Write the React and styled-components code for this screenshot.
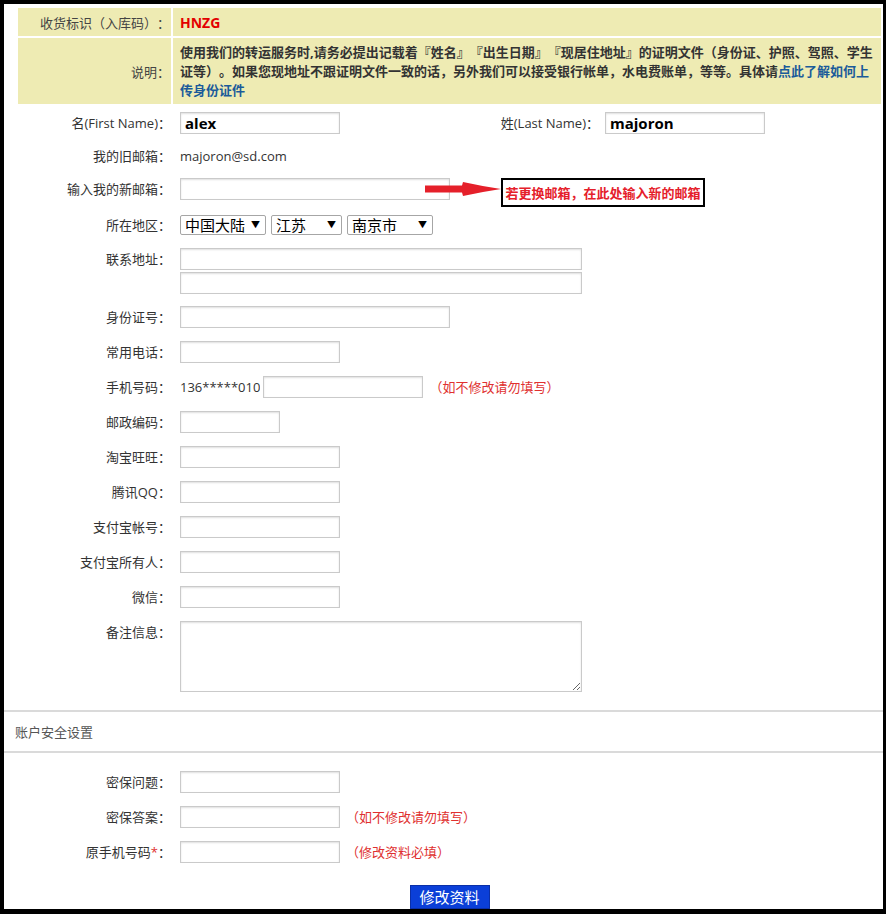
import styled, { createGlobalStyle } from "styled-components";

const GlobalStyle = createGlobalStyle`
  body {
    margin: 0;
    background: #fff;
    font-family: "Open Sans", "Noto Sans CJK SC", sans-serif;
    font-size: 13px;
    color: #333;
    text-spacing-trim: space-all;
  }
`;

const Frame = styled.div`
  width: 886px;
  height: 914px;
  box-sizing: border-box;
  border-style: solid;
  border-color: #000;
  border-width: 4px 3px 5px 4px;
  overflow: hidden;
  display: flex;
  flex-direction: column;
`;

const InfoTable = styled.div`
  display: flex;
  flex-direction: column;
  gap: 2px;
  padding: 4px 2px 0 14px;
`;

const InfoRow = styled.div`
  display: grid;
  grid-template-columns: 153px 1fr;
  column-gap: 2px;
  height: ${(p) => p.$height}px;
`;

const InfoLabel = styled.div`
  background: #eeebb3;
  padding-right: 1px;
  display: flex;
  align-items: center;
  justify-content: flex-end;
  color: #444;
  white-space: nowrap;
`;

const InfoValue = styled.div`
  background: #eeebb3;
  padding: ${(p) => (p.$multi ? "5px 0 4px 7px" : "0 0 0 7px")};
  display: flex;
  align-items: center;
  line-height: 19px;
`;

const Code = styled.span`
  color: #e30000;
  font-weight: 700;
  font-size: 14px;
`;

const Notice = styled.p`
  margin: 0;
  font-weight: 700;
  color: #333;
  white-space: nowrap;
`;

const NoticeLink = styled.a`
  color: #1b5b9a;
  text-decoration: none;
`;

const Form = styled.div`
  display: flex;
  flex-direction: column;
  padding-top: ${(p) => p.$top || 0}px;
  padding-bottom: ${(p) => p.$bottom || 0}px;
`;

const Row = styled.div`
  display: flex;
  align-items: flex-start;
  padding: ${(p) => p.$pad || "6px 0 7px"};
`;

const Label = styled.label`
  flex: none;
  width: 167px;
  height: ${(p) => (p.$compact ? 20 : 22)}px;
  box-sizing: border-box;
  text-align: right;
  line-height: ${(p) => (p.$compact ? 20 : 22)}px;
  color: #333;
  white-space: nowrap;
  overflow: hidden;
`;

const Star = styled.span`
  color: #e03030;
`;

const Field = styled.div`
  position: relative;
  margin-left: 9px;
  display: flex;
  gap: ${(p) => p.$gap || 0}px;
  flex-direction: ${(p) => (p.$column ? "column" : "row")};
  align-items: ${(p) => (p.$column ? "flex-start" : "center")};
`;

const Input = styled.input`
  box-sizing: border-box;
  width: ${(p) => p.$w || 160}px;
  height: 22px;
  border: 1px solid #cacaca;
  box-shadow: inset 0 1px 2px rgba(0, 0, 0, 0.13);
  padding: 0 4px;
  font-family: "Open Sans", "Liberation Sans", sans-serif;
  font-size: 15px;
  font-weight: 700;
  color: #000;
  background: #fff;
  outline: none;
`;

const TextArea = styled.textarea`
  display: block;
  box-sizing: border-box;
  width: 402px;
  height: 71px;
  margin: 0;
  border: 1px solid #cacaca;
  box-shadow: inset 0 1px 2px rgba(0, 0, 0, 0.13);
  font-family: inherit;
  font-size: 13px;
  outline: none;
`;

const PlainValue = styled.span`
  height: 22px;
  line-height: 22px;
  color: #333;
  margin-right: ${(p) => p.$mr || 0}px;
  overflow: hidden;
`;

const LastLabel = styled(Label)`
  width: 265px;
  padding-right: 6px;
`;

const Note = styled.span`
  height: 22px;
  color: #e0302f;
  margin-left: 6px;
  line-height: 22px;
  overflow: hidden;
`;

const SelectWrap = styled.div`
  position: relative;
  width: ${(p) => p.$w}px;
  height: 20px;
  &::after {
    content: "▼";
    position: absolute;
    right: 6px;
    top: 4px;
    font-size: 9px;
    line-height: 12px;
    color: #000;
    pointer-events: none;
  }
`;

const Select = styled.select`
  appearance: none;
  display: block;
  box-sizing: border-box;
  width: 100%;
  height: 20px;
  margin: 0;
  border: 1px solid #a6a6a6;
  border-radius: 2px;
  background: #fff;
  padding: 0 0 0 4px;
  font-family: "Noto Sans CJK SC", sans-serif;
  font-size: 15px;
  line-height: 18px;
  color: #000;
  outline: none;
`;

const Arrow = styled.svg`
  position: absolute;
  left: 245px;
  top: 3px;
`;

const Callout = styled.div`
  position: absolute;
  left: 321px;
  top: 0;
  width: 204px;
  height: 29px;
  box-sizing: border-box;
  border: 2px solid #000;
  display: flex;
  align-items: center;
  justify-content: center;
  color: #e5202a;
  font-weight: 700;
  font-family: "Noto Sans CJK SC", sans-serif;
  white-space: nowrap;
`;

const SectionTitle = styled.div`
  height: 44px;
  box-sizing: border-box;
  border-top: 2px solid #dadada;
  border-bottom: 2px solid #dadada;
  padding-left: 11px;
  display: flex;
  align-items: center;
  color: #555;
`;

const ButtonBar = styled.div`
  display: flex;
  justify-content: center;
  padding: 15px 0 0 12px;
`;

const SubmitButton = styled.button`
  width: 80px;
  height: 24px;
  border: 1px solid #0a2fa8;
  background: #0b3fd8;
  color: #fff;
  font-family: "Noto Sans CJK SC", sans-serif;
  font-size: 15px;
  padding: 0;
  line-height: 22px;
`;

const simpleFields = [
  ["身份证号", 270],
  ["常用电话", 160],
];

const moreFields = [
  ["邮政编码", 100],
  ["淘宝旺旺", 160],
  ["腾讯QQ", 160],
  ["支付宝帐号", 160],
  ["支付宝所有人", 160],
  ["微信", 160],
];

export default function App() {
  return (
    <>
      <GlobalStyle />
      <Frame>
        <InfoTable>
          <InfoRow $height={28}>
            <InfoLabel>收货标识（入库码）：</InfoLabel>
            <InfoValue>
              <Code>HNZG</Code>
            </InfoValue>
          </InfoRow>
          <InfoRow $height={66}>
            <InfoLabel>说明：</InfoLabel>
            <InfoValue $multi>
              <Notice>
                使用我们的转运服务时,请务必提出记载着『姓名』『出生日期』『现居住地址』的证明文件（身份证、护照、驾照、学生
                <br />
                证等）。如果您现地址不跟证明文件一致的话，另外我们可以接受银行帐单，水电费账单，等等。具体请
                <NoticeLink href="#">
                  点此了解如何上
                  <br />
                  传身份证件
                </NoticeLink>
              </Notice>
            </InfoValue>
          </InfoRow>
        </InfoTable>

        <Form $top={2} $bottom={11}>
          <Row $pad="6px 0 5px">
            <Label>名(First Name)：</Label>
            <Field>
              <Input defaultValue="alex" />
              <LastLabel as="span">姓(Last Name)：</LastLabel>
              <Input defaultValue="majoron" />
            </Field>
          </Row>
          <Row $pad="6px 0 5px">
            <Label>我的旧邮箱：</Label>
            <Field>
              <PlainValue>majoron@sd.com</PlainValue>
            </Field>
          </Row>
          <Row>
            <Label>输入我的新邮箱：</Label>
            <Field>
              <Input $w={270} />
              <Arrow width="76" height="16" viewBox="0 0 76 16">
                <path d="M0 4.5 H37 L38 1 Q56 5 76 8 Q56 11 38 15 L37 11.5 H0 Z" fill="#e5202a" />
              </Arrow>
              <Callout>若更换邮箱，在此处输入新的邮箱</Callout>
            </Field>
          </Row>
          <Row $pad="8px 0 7px">
            <Label $compact>所在地区：</Label>
            <Field $gap={5}>
              <SelectWrap $w={86}>
                <Select defaultValue="cn">
                  <option value="cn">中国大陆</option>
                </Select>
              </SelectWrap>
              <SelectWrap $w={71}>
                <Select defaultValue="js">
                  <option value="js">江苏</option>
                </Select>
              </SelectWrap>
              <SelectWrap $w={86}>
                <Select defaultValue="nj">
                  <option value="nj">南京市</option>
                </Select>
              </SelectWrap>
            </Field>
          </Row>
          <Row $pad="6px 0 6px">
            <Label>联系地址：</Label>
            <Field $column $gap={2}>
              <Input $w={402} />
              <Input $w={402} />
            </Field>
          </Row>
          {simpleFields.map(([label, w]) => (
            <Row key={label}>
              <Label>{label}：</Label>
              <Field>
                <Input $w={w} />
              </Field>
            </Row>
          ))}
          <Row>
            <Label>手机号码：</Label>
            <Field>
              <PlainValue $mr={3}>136*****010</PlainValue>
              <Input $w={160} />
              <Note>（如不修改请勿填写）</Note>
            </Field>
          </Row>
          {moreFields.map(([label, w]) => (
            <Row key={label}>
              <Label>{label}：</Label>
              <Field>
                <Input $w={w} />
              </Field>
            </Row>
          ))}
          <Row>
            <Label>备注信息：</Label>
            <Field>
              <TextArea />
            </Field>
          </Row>
        </Form>

        <SectionTitle>账户安全设置</SectionTitle>

        <Form $top={12}>
          <Row>
            <Label>密保问题：</Label>
            <Field>
              <Input $w={160} />
            </Field>
          </Row>
          <Row>
            <Label>密保答案：</Label>
            <Field>
              <Input $w={160} />
              <Note>（如不修改请勿填写）</Note>
            </Field>
          </Row>
          <Row>
            <Label>
              原手机号码<Star>*</Star>：
            </Label>
            <Field>
              <Input $w={160} />
              <Note>（修改资料必填）</Note>
            </Field>
          </Row>
        </Form>

        <ButtonBar>
          <SubmitButton type="button">修改资料</SubmitButton>
        </ButtonBar>
      </Frame>
    </>
  );
}
